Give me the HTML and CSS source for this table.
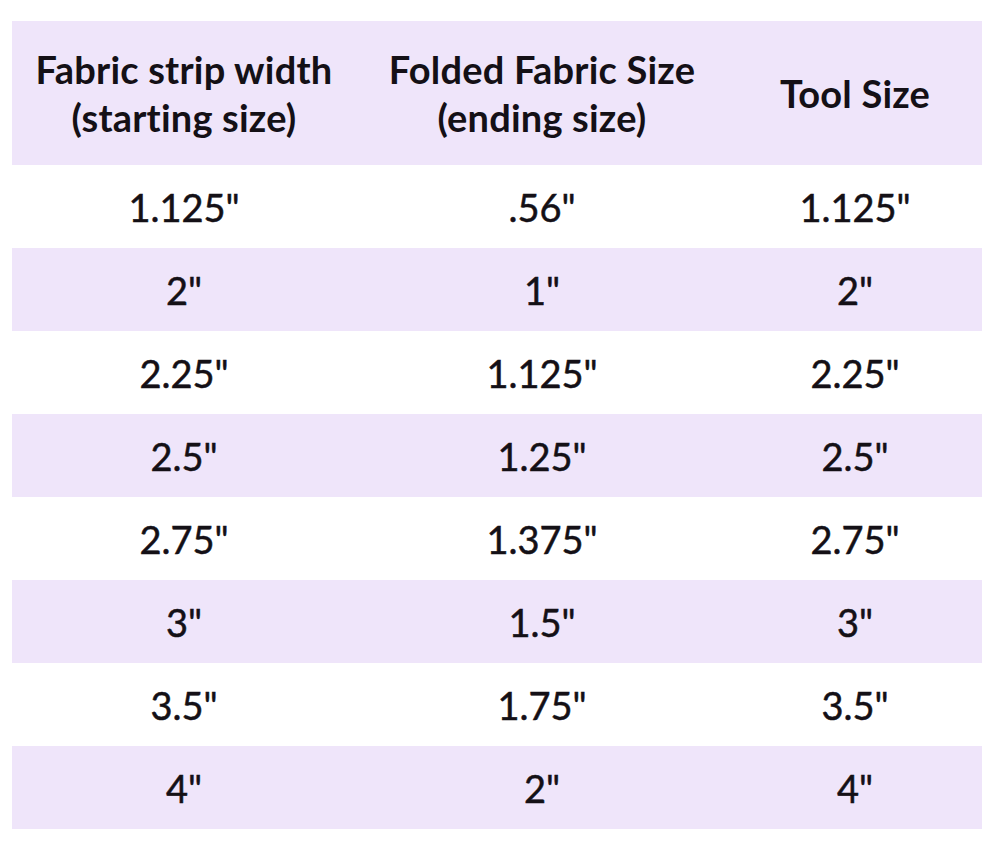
FILE: index.html
```html
<!DOCTYPE html>
<html>
<head>
<meta charset="utf-8">
<link rel="stylesheet" href="styles.css">
</head>
<body>
<table class="sizes">
  <colgroup>
    <col class="c1"><col class="c2"><col class="c3">
  </colgroup>
  <thead>
    <tr class="head">
      <th>Fabric strip width<br>(starting size)</th>
      <th>Folded Fabric Size<br>(ending size)</th>
      <th>Tool Size</th>
    </tr>
  </thead>
  <tbody>
    <tr><td>1.125"</td><td>.56"</td><td>1.125"</td></tr>
    <tr class="alt"><td>2"</td><td>1"</td><td>2"</td></tr>
    <tr><td>2.25"</td><td>1.125"</td><td>2.25"</td></tr>
    <tr class="alt"><td>2.5"</td><td>1.25"</td><td>2.5"</td></tr>
    <tr><td>2.75"</td><td>1.375"</td><td>2.75"</td></tr>
    <tr class="alt"><td>3"</td><td>1.5"</td><td>3"</td></tr>
    <tr><td>3.5"</td><td>1.75"</td><td>3.5"</td></tr>
    <tr class="alt"><td>4"</td><td>2"</td><td>4"</td></tr>
  </tbody>
</table>
</body>
</html>
```

FILE: styles.css
```css
html, body {
  margin: 0;
  padding: 0;
  background: #ffffff;
}
body {
  padding: 21px 18px 0 12px;
  font-family: Lato, "Open Sans", sans-serif;
  color: #141016;
}
.sizes {
  width: 970px;
  border-collapse: collapse;
  table-layout: fixed;
}
.c1 { width: 344px; }
.c2 { width: 372px; }
.c3 { width: 254px; }
.sizes th {
  height: 144px;
  padding: 0;
  font-weight: 700;
  font-size: 38px;
  line-height: 48px;
  letter-spacing: 0.2px;
  text-align: center;
  vertical-align: middle;
}
.head { background: #efe5fa; }
.sizes td {
  height: 83px;
  padding: 0;
  font-size: 38px;
  -webkit-text-stroke: 0.5px #141016;
  text-align: center;
  vertical-align: middle;
}
.alt { background: #efe5fa; }
```
